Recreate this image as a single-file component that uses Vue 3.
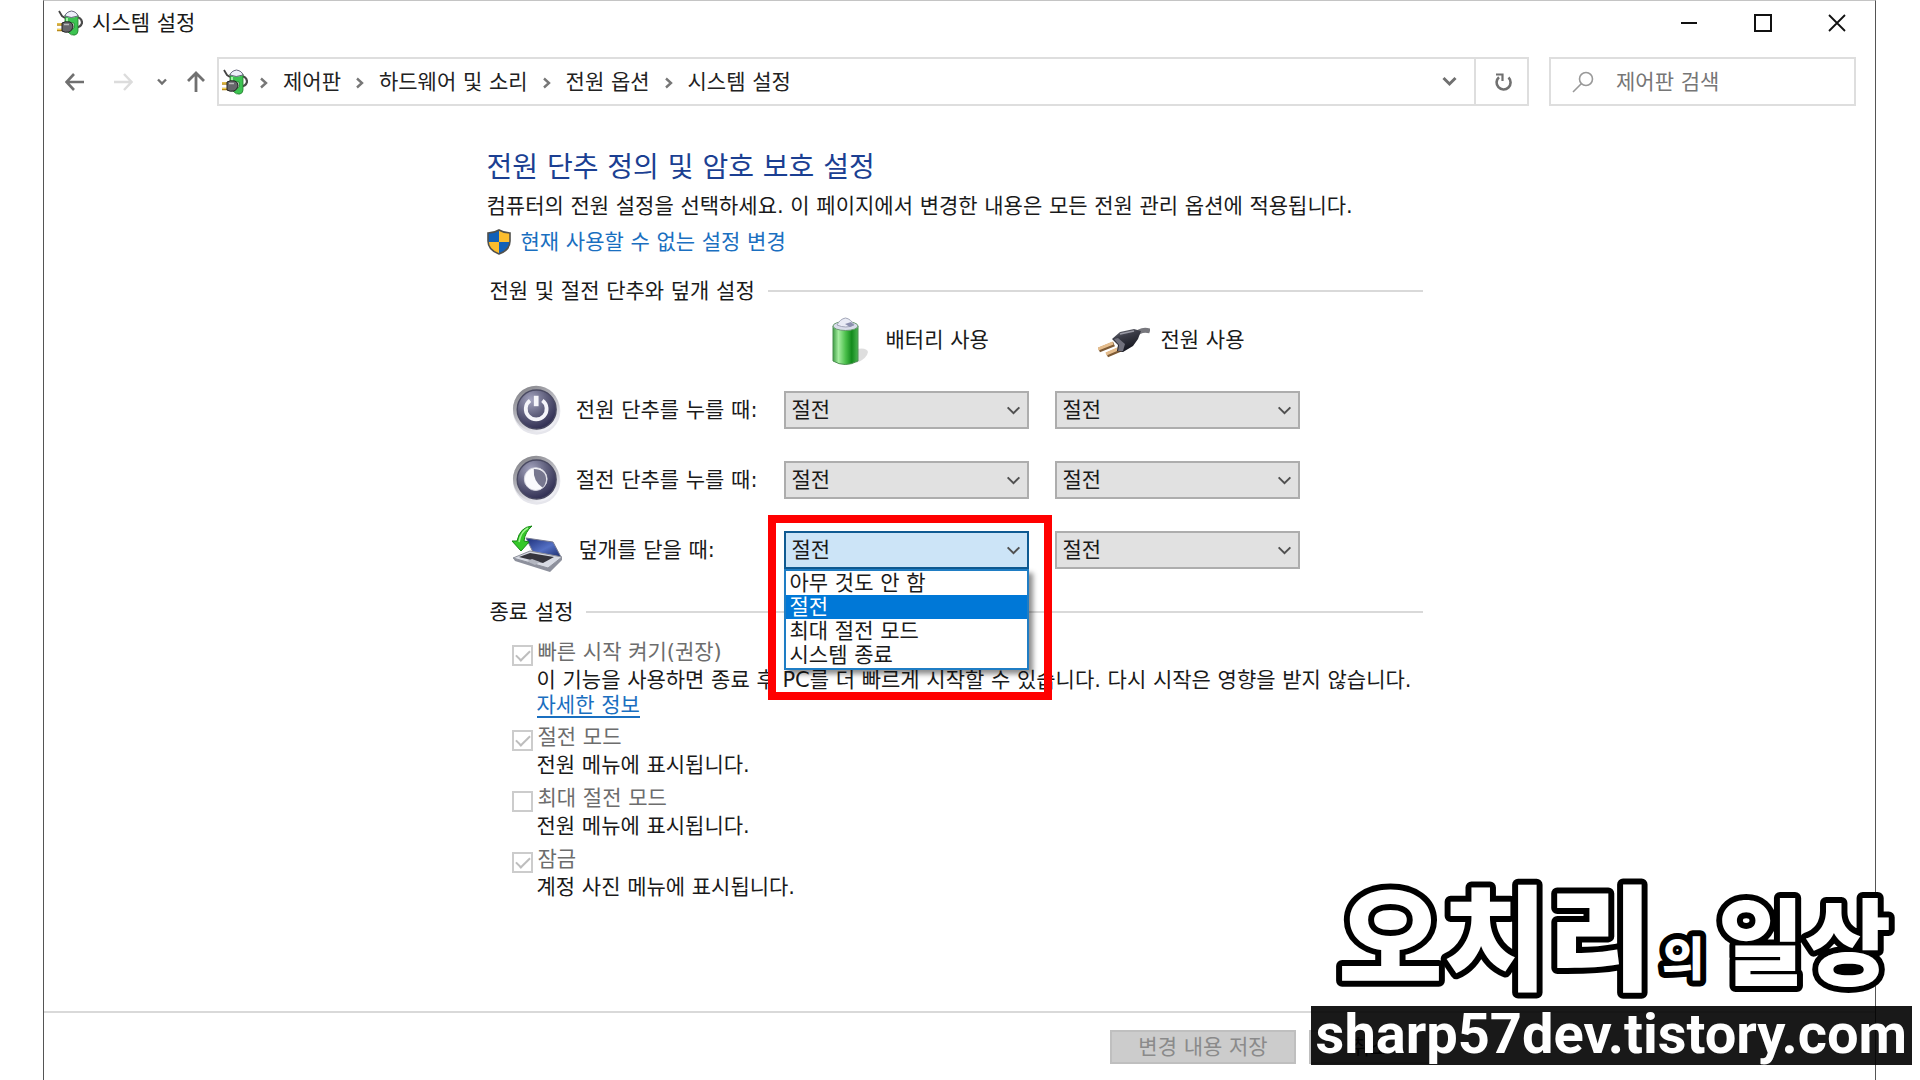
<script setup>
import { ref } from 'vue'

const crumbs = ['제어판', '하드웨어 및 소리', '전원 옵션', '시스템 설정']
const actions = ['아무 것도 안 함', '절전', '최대 절전 모드', '시스템 종료']

const rows = ref([
  { id: 'power', label: '전원 단추를 누를 때:', battery: '절전', plugged: '절전' },
  { id: 'sleep', label: '절전 단추를 누를 때:', battery: '절전', plugged: '절전' },
  { id: 'lid', label: '덮개를 닫을 때:', battery: '절전', plugged: '절전', open: true }
])

const shutdown = ref([
  {
    id: 'fast',
    label: '빠른 시작 켜기(권장)',
    text: '이 기능을 사용하면 종료 후 PC를 더 빠르게 시작할 수 있습니다. 다시 시작은 영향을 받지 않습니다.',
    link: '자세한 정보',
    checked: true
  },
  { id: 'suspend', label: '절전 모드', text: '전원 메뉴에 표시됩니다.', checked: true },
  { id: 'hibernate', label: '최대 절전 모드', text: '전원 메뉴에 표시됩니다.', checked: false },
  { id: 'lock', label: '잠금', text: '계정 사진 메뉴에 표시됩니다.', checked: true }
])
</script>

<template>
  <div class="desktop">
    <!-- shared shapes and gradients -->
    <svg class="defs" width="0" height="0" aria-hidden="true">
      <defs>
        <linearGradient id="green" x1="0" x2="1" y1="0" y2="0">
          <stop offset="0" stop-color="#3f9f45" />
          <stop offset="0.22" stop-color="#a5eda0" />
          <stop offset="0.5" stop-color="#4cc04c" />
          <stop offset="0.75" stop-color="#128a1c" />
          <stop offset="1" stop-color="#4cb552" />
        </linearGradient>
        <linearGradient id="ring" x1="0" x2="0.6" y1="0" y2="1">
          <stop offset="0" stop-color="#77777c" />
          <stop offset="0.5" stop-color="#b3b3ba" />
          <stop offset="1" stop-color="#f0f0f5" />
        </linearGradient>
        <radialGradient id="ball" cx="0.35" cy="0.25" r="0.8">
          <stop offset="0" stop-color="#a5a5c0" />
          <stop offset="0.5" stop-color="#62627f" />
          <stop offset="1" stop-color="#2d2b50" />
        </radialGradient>
        <linearGradient id="screen" x1="0" x2="1" y1="0" y2="1">
          <stop offset="0" stop-color="#1d2f78" />
          <stop offset="0.55" stop-color="#5470c4" />
          <stop offset="1" stop-color="#1c2c6a" />
        </linearGradient>
        <linearGradient id="plug" x1="0" x2="0.4" y1="0" y2="1">
          <stop offset="0" stop-color="#7d7d86" />
          <stop offset="0.4" stop-color="#3b3c47" />
          <stop offset="1" stop-color="#15161f" />
        </linearGradient>
        <symbol id="power-options" viewBox="0 0 26 26">
          <path d="M18 7Q25 7 25 13Q24 17 18 18" fill="none" stroke="#4a4a4a" stroke-width="2.2" />
          <path d="M8 5V13H17V18L11 22Q14 26 18 25Q21 24 21 21V5z" fill="#3cc351" stroke="#257a2c" stroke-width="0.8" />
          <path d="M10 8V12" stroke="#a4f0a8" stroke-width="2" />
          <path d="M8 6Q9 2 14.500 1Q20 2 21 6Q14 9 8 6z" fill="#eef0fb" stroke="#66667c" />
          <path d="M2 1L5 6L8 8" fill="none" stroke="#444" stroke-width="1.800" />
          <path d="M0 14.500H6M0 20H6" stroke="#b98a1a" stroke-width="2.600" />
          <path d="M0 14H6M0 19.500H6" stroke="#f2cf52" stroke-width="1" />
          <path d="M5 13Q8 11 13 12Q16 13 16 17Q15 21 12 22Q8 23 5 21z" fill="#66676b" stroke="#222" />
          <path d="M7 14.500H12" stroke="#bbb" stroke-width="1.500" />
        </symbol>
        <symbol id="down" viewBox="0 0 16 10">
          <path d="M1.500 1.500 L8 8 L14.500 1.500" fill="none" stroke="currentColor" stroke-width="2.200" />
        </symbol>
      </defs>
    </svg>

    <div class="window">
      <header class="titlebar">
        <svg class="app-icon" aria-hidden="true"><use href="#power-options" /></svg>
        <span class="title">시스템 설정</span>
        <div class="controls">
          <button type="button" aria-label="최소화">
            <svg width="18" height="18"><path d="M1 9h16" stroke="#111" stroke-width="2" /></svg>
          </button>
          <button type="button" aria-label="최대화">
            <svg width="18" height="18"><rect x="1" y="1" width="16" height="16" fill="none" stroke="#111" stroke-width="2" /></svg>
          </button>
          <button type="button" aria-label="닫기">
            <svg width="18" height="18"><path d="M1 1l16 16M17 1L1 17" stroke="#111" stroke-width="1.800" /></svg>
          </button>
        </div>
      </header>

      <nav class="toolbar">
        <div class="history">
          <button type="button" class="back" aria-label="뒤로">
            <svg width="20" height="20" fill="none" stroke="#707070" stroke-width="2.600"><path d="M19 10H2M9 2L1.500 10L9 18" /></svg>
          </button>
          <button type="button" class="forward" aria-label="앞으로" disabled>
            <svg width="20" height="20" fill="none" stroke="#dcdcdc" stroke-width="2.400"><path d="M1 10h17M11 2l7.500 8L11 18" /></svg>
          </button>
          <button type="button" class="recent" aria-label="최근 위치">
            <svg width="10" height="8" fill="none" stroke="#707070" stroke-width="2.400"><path d="M1 1.500L5 5.500L9 1.500" /></svg>
          </button>
          <button type="button" class="up" aria-label="위로">
            <svg width="20" height="22" fill="none" stroke="#707070" stroke-width="2.800"><path d="M10 21V2M2 10l8-8 8 8" /></svg>
          </button>
        </div>
        <div class="address">
          <svg class="app-icon" aria-hidden="true"><use href="#power-options" /></svg>
          <template v-for="crumb in crumbs" :key="crumb">
            <svg class="sep" width="8" height="12" aria-hidden="true">
              <path d="M1 1.500L6 6L1 10.500" fill="none" stroke="#777" stroke-width="2.400" />
            </svg>
            <a href="#" class="crumb">{{ crumb }}</a>
          </template>
          <button type="button" class="expand" aria-label="이전 위치">
            <svg width="15" height="11" fill="none" stroke="#707070" stroke-width="3"><path d="M1.500 2L7.500 8L13.500 2" /></svg>
          </button>
          <button type="button" class="refresh" aria-label="새로 고침">
            <svg width="18" height="20" fill="none" stroke="#707070">
              <path d="M14.500 5.500A7 7 0 1 1 5 5.200" stroke-width="2.600" />
              <path d="M2 2.500H8.500V9" stroke-width="2.200" />
            </svg>
          </button>
        </div>
        <label class="search">
          <svg width="22" height="22" fill="none" stroke="#999" stroke-width="1.600" aria-hidden="true">
            <circle cx="14" cy="8" r="6.500" />
            <path d="M9.500 12.500L1 21" />
          </svg>
          <input type="search" placeholder="제어판 검색" aria-label="제어판 검색" />
        </label>
      </nav>

      <main>
        <h1>전원 단추 정의 및 암호 보호 설정</h1>
        <p class="intro">컴퓨터의 전원 설정을 선택하세요. 이 페이지에서 변경한 내용은 모든 전원 관리 옵션에 적용됩니다.</p>
        <a href="#" class="elevate">
          <svg width="24" height="26" viewBox="0 0 24 26" aria-hidden="true">
            <path d="M12 1Q7 4 1 4V13H12z" fill="#1160b8" />
            <path d="M12 1Q17 4 23 4V13H12z" fill="#fcbd2e" />
            <path d="M1 13Q2 21 12 25V13z" fill="#fcbd2e" />
            <path d="M23 13Q22 21 12 25V13z" fill="#1160b8" />
            <path d="M12 1Q17 4 23 4V12Q23 21 12 25Q1 21 1 12V4Q7 4 12 1z" fill="none" stroke="#51504c" stroke-width="1.600" />
          </svg>
          <span>현재 사용할 수 없는 설정 변경</span>
        </a>

        <section class="buttons">
          <h2>전원 및 절전 단추와 덮개 설정</h2>
          <div class="grid heads">
            <span></span>
            <div class="head">
              <svg width="48" height="52" viewBox="0 0 48 52" aria-hidden="true">
                <path d="M29 35 Q40 33 41 38 Q40 45 29 49z" fill="#000" opacity="0.130" />
                <path d="M6 12 V47 Q18 54 31 47 V12z" fill="url(#green)" stroke="#4b8f50" />
                <ellipse cx="18.500" cy="12" rx="12.500" ry="4.500" fill="#d9dcea" stroke="#6b9a72" />
                <path d="M10 11Q13 5 18.500 4Q24 5 27 11Q19 15 10 11z" fill="#e9ebf5" stroke="#a2a6b8" />
                <path d="M18 10l5 3 4-2-3-3z" fill="#8b8fae" />
              </svg>
              <span>배터리 사용</span>
            </div>
            <div class="head">
              <svg width="52" height="40" viewBox="0 0 52 40" aria-hidden="true">
                <path d="M36 16Q43 8 52 11" fill="none" stroke="#77777d" stroke-width="5" />
                <path d="M1 30L16 24M9 35L23 29" stroke="#7d5a35" stroke-width="5" />
                <path d="M0 29L15 23M8 34L22 28" stroke="#e5bd8d" stroke-width="3" />
                <path d="M14 19L22 12L36 9L43 11L40 19L35 26L25 32L19 31L20 25z" fill="url(#plug)" />
                <path d="M16 19L20 18L27 24L25 31L20 31L21 25z" fill="#70707c" />
                <path d="M22 14L36 11" stroke="#9a9aa5" stroke-width="1.500" />
              </svg>
              <span>전원 사용</span>
            </div>
          </div>

          <div v-for="row in rows" :key="row.id" class="grid row">
            <label class="name" :for="row.id + '-battery'">
              <svg v-if="row.id !== 'lid'" width="52" height="52" viewBox="0 0 52 52" aria-hidden="true">
                <circle cx="26" cy="27" r="25" fill="#e6e6ec" />
                <circle cx="25.500" cy="25" r="24.500" fill="url(#ring)" />
                <circle cx="26" cy="25.500" r="20.500" fill="url(#ball)" stroke="#4a4a62" stroke-width="1.500" />
                <g v-if="row.id === 'power'" fill="none" stroke="#f5f5fa">
                  <path d="M19 16A11 11 0 1 0 32 16" stroke-width="4" />
                  <path d="M25.500 11V22" stroke-width="5" />
                </g>
                <g v-else>
                  <circle cx="25" cy="25" r="12" fill="#fafafd" stroke="#d8d8e2" />
                  <path d="M23 14.500Q36 15 36 26Q35 32 32 34Q22 27 23 14.500z" fill="#77778f" />
                </g>
              </svg>
              <svg v-else width="52" height="52" viewBox="0 0 52 52" aria-hidden="true">
                <path d="M14 14L41 18L49 33L21 28z" fill="url(#screen)" stroke="#777b90" />
                <path d="M1 34L18 27L50 33L36 44z" fill="#d7dae3" stroke="#8d909a" />
                <path d="M36 44L50 33V36L38 48L3 37L1 34z" fill="#8d909c" />
                <path d="M7 33L18 29L42 33L31 39z" fill="#35353d" />
                <path d="M15 37L20 35L28 38L23 41z" fill="#b3b6c0" />
                <path d="M20 2Q8 3 5 17L0 17L9 27L17 18L12 17Q13 8 20 2z" fill="#35c829" stroke="#198817" />
                <path d="M16 4Q9 7 7 18" fill="none" stroke="#a4f495" stroke-width="1.500" />
              </svg>
              <span>{{ row.label }}</span>
            </label>
            <div v-for="kind in ['battery', 'plugged']" :key="kind" class="combo" :class="{ open: row.open && kind === 'battery' }">
              <select :id="row.id + '-' + kind" v-model="row[kind]" :aria-label="row.label">
                <option v-for="action in actions" :key="action">{{ action }}</option>
              </select>
              <svg class="arrow" width="15" height="9" aria-hidden="true"><use href="#down" /></svg>
              <template v-if="row.open && kind === 'battery'">
                <ul class="list" role="listbox">
                  <li v-for="action in actions" :key="action" role="option" :aria-selected="action === row[kind]" :class="{ selected: action === row[kind] }">
                    {{ action }}
                  </li>
                </ul>
                <div class="marker"></div>
              </template>
            </div>
          </div>
        </section>

        <section class="shutdown">
          <h2>종료 설정</h2>
          <div v-for="item in shutdown" :key="item.id" class="item">
            <div class="check">
              <input :id="item.id" v-model="item.checked" type="checkbox" disabled />
              <label :for="item.id">{{ item.label }}</label>
            </div>
            <p>{{ item.text }}</p>
            <a v-if="item.link" href="#" class="more">{{ item.link }}</a>
          </div>
        </section>
      </main>

      <footer>
        <button type="button" disabled>변경 내용 저장</button>
        <button type="button" class="cancel">취소</button>
      </footer>
    </div>

    <div class="watermark">
      <svg class="brand" width="600" height="140">
        <text class="big" x="27" y="115">오치리</text>
        <text class="small" x="351" y="109">의</text>
        <text class="mid" x="407" y="112">일상</text>
      </svg>
      <div class="url">sharp57dev.tistory.com</div>
    </div>
  </div>
</template>

<style>
body {
  margin: 0;
  background: #fff;
}
</style>

<style scoped>
.desktop {
  position: relative;
  box-sizing: border-box;
  min-height: 100vh;
  padding: 0 44px 0 43px;
  overflow: hidden;
  display: flex;
  font-family: 'DejaVu Sans', 'Noto Sans CJK KR', sans-serif;
  font-size: 21px;
  line-height: 28px;
  color: #1a1a1a;
  white-space: nowrap;
}

.defs {
  position: absolute;
}

.window {
  flex: 1;
  display: flex;
  flex-direction: column;
  border: 1px solid #555;
  border-top-color: #c4c4c4;
  border-bottom: 0;
}

button {
  padding: 0;
  border: 0;
  background: none;
  font: inherit;
  color: #707070;
}

button svg {
  display: block;
}

a {
  color: #1a6fc0;
  text-decoration: none;
}

h1,
h2,
p,
ul {
  margin: 0;
  padding: 0;
  font-weight: 400;
}

.app-icon {
  width: 26px;
  height: 26px;
  flex: none;
}

.titlebar {
  height: 44px;
  display: flex;
  align-items: center;
  padding: 0 29px 0 13px;
}

.title {
  margin-left: 9px;
}

.controls {
  margin-left: auto;
  display: flex;
  gap: 56px;
}

.toolbar {
  display: flex;
  padding: 12px 19px 0 21px;
}

.history {
  width: 152px;
  display: flex;
  align-items: center;
}

.forward {
  margin-left: 28px;
}

.recent {
  margin-left: 24px;
}

.up {
  margin-left: 19px;
}

.address,
.search {
  box-sizing: border-box;
  height: 49px;
  display: flex;
  align-items: center;
  border: 2px solid #dedede;
}

.address {
  flex: 1;
  padding-left: 3px;
}

.sep {
  margin: 2px 15px 0 12px;
}

.crumb {
  color: #222;
}

.crumb + .sep {
  margin-left: 15px;
}

.expand {
  margin-left: auto;
  margin-right: 17px;
}

.refresh {
  align-self: stretch;
  width: 53px;
  padding-left: 18px;
  border-left: 2px solid #dedede;
}

.search {
  width: 307px;
  margin-left: 20px;
  padding-left: 21px;
}

.search input {
  flex: 1;
  min-width: 0;
  margin-left: 22px;
  padding: 0;
  border: 0;
  outline: 0;
  background: none;
  font: inherit;
}

.search input::placeholder {
  color: #767676;
}

main {
  flex: 1;
  width: 946px;
  max-width: 100%;
  margin: 0 auto;
  padding-top: 44px;
}

h1 {
  font-size: 28px;
  line-height: 36px;
  color: #1b3f92;
}

.intro {
  margin-top: 6px;
}

.elevate {
  height: 36px;
  margin-top: 4px;
  display: flex;
  align-items: center;
  gap: 10px;
}

h2 {
  display: flex;
  align-items: center;
  gap: 13px;
  margin-right: 10px;
  padding-left: 3px;
  font-size: 21px;
  line-height: 28px;
}

h2::after {
  content: '';
  flex: 1;
  height: 2px;
  background: #d9d9d9;
}

.buttons {
  margin-top: 17px;
}

.grid {
  display: grid;
  grid-template-columns: 271px 245px 245px;
  column-gap: 26px;
  align-items: center;
}

.heads {
  height: 52px;
  margin-top: 9px;
}

.head {
  display: flex;
  align-items: center;
  gap: 11px;
  padding-left: 43px;
}

.row {
  height: 50px;
  margin-top: 20px;
}

.heads + .row {
  margin-top: 18px;
}

.name {
  display: flex;
  align-items: center;
  gap: 15px;
  padding-left: 25px;
}

.combo {
  position: relative;
  height: 38px;
  color: #505050;
}

.combo select {
  display: block;
  box-sizing: border-box;
  width: 100%;
  height: 38px;
  padding: 0 30px 0 6px;
  appearance: none;
  border: 2px solid #adadad;
  border-radius: 0;
  background: #e1e1e1;
  font: inherit;
  color: #1a1a1a;
}

.combo.open select {
  border-color: #0f5a92;
  background: #cce4f7;
}

.arrow {
  position: absolute;
  right: 8px;
  top: 15px;
}

.list {
  position: absolute;
  z-index: 1;
  left: 0;
  right: 0;
  top: 38px;
  padding-bottom: 1px;
  border: 2px solid #1f7dc4;
  background: #fff;
  box-shadow: 4px 4px 5px rgba(0, 0, 0, 0.45);
  list-style: none;
  line-height: 24px;
  color: #1a1a1a;
}

.list li {
  padding-left: 4px;
}

.list .selected {
  background: #0078d7;
  color: #fff;
}

/* red frame around the opened list */
.marker {
  position: absolute;
  z-index: 2;
  left: -16px;
  top: -16px;
  width: 268px;
  height: 169px;
  border: 8px solid #f00;
}

.shutdown {
  margin-top: 24px;
}

h2 + .item {
  margin-top: 12px;
}

.item {
  margin-top: 5px;
  padding-left: 50px;
}

.check {
  display: flex;
  align-items: flex-end;
  gap: 5px;
  margin-left: -25px;
  color: #6d6d6d;
}

.check input {
  box-sizing: border-box;
  width: 21px;
  height: 21px;
  margin: 0;
  appearance: none;
  border: 2px solid #ccc;
  background: #fff;
}

.check input:checked::before {
  content: '';
  display: block;
  width: 12px;
  height: 6px;
  margin: 3px 0 0 2px;
  border: solid #bdbdbd;
  border-width: 0 0 2px 2px;
  transform: rotate(-45deg);
}

.more {
  display: block;
  width: max-content;
  line-height: 22px;
  border-bottom: 2px solid #1a6fc0;
}

footer {
  height: 50px;
  padding: 17px 444px 0 0;
  display: flex;
  justify-content: flex-end;
  gap: 13px;
  border-top: 2px solid #d9d9d9;
}

footer button {
  box-sizing: border-box;
  width: 186px;
  height: 34px;
  border: 2px solid #bfbfbf;
  background: #ccc;
  line-height: 26px;
  color: #8a8a8a;
}

footer .cancel {
  width: 122px;
  background: #e1e1e1;
  color: #1a1a1a;
}

.watermark {
  position: absolute;
  z-index: 3;
  right: 8px;
  bottom: 15px;
}

.brand {
  display: block;
  overflow: visible;
  font-family: 'Noto Sans CJK KR', sans-serif;
  font-weight: 900;
  fill: #fff;
  stroke: #000;
  stroke-width: 12px;
  stroke-linejoin: round;
  paint-order: stroke fill;
}

.big {
  font-size: 114px;
}

.small {
  font-size: 46px;
}

.mid {
  font-size: 94px;
}

.url {
  height: 59px;
  padding: 0 5px;
  background: rgba(0, 0, 0, 0.9);
  font-family: Roboto, sans-serif;
  font-size: 56px;
  font-weight: 700;
  line-height: 56px;
  color: #fff;
}
</style>
